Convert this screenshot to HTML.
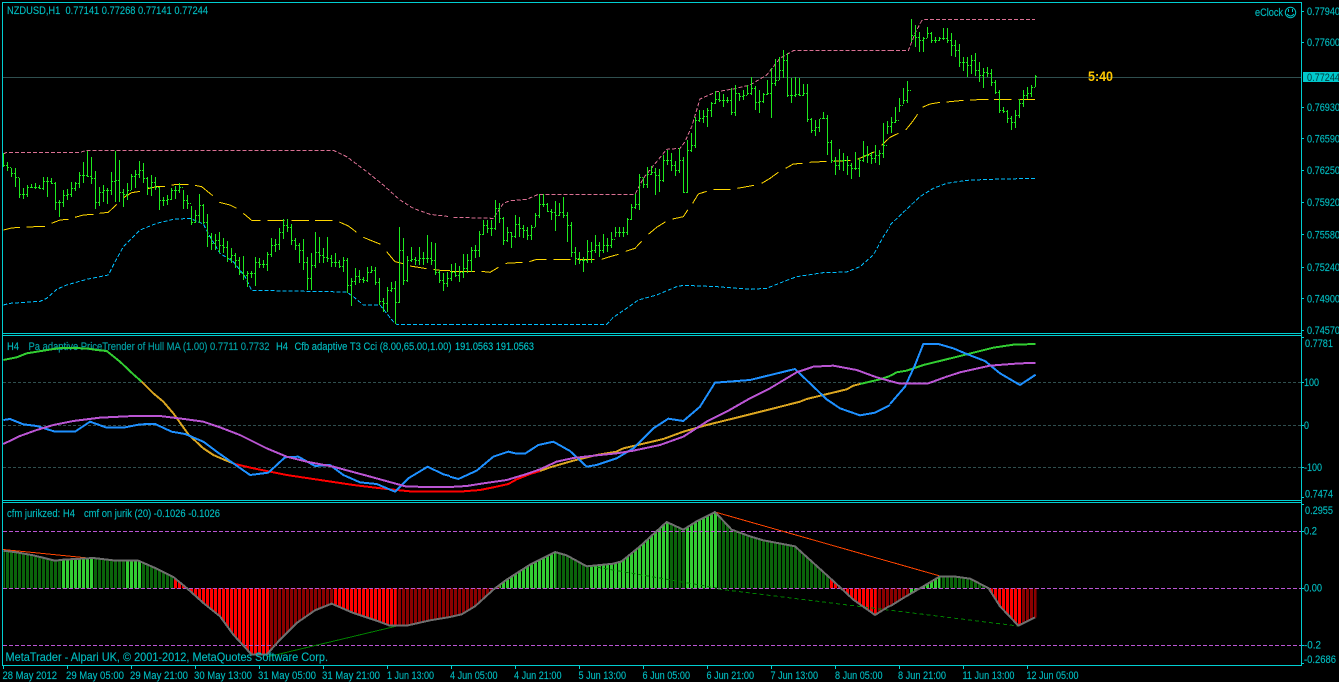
<!DOCTYPE html>
<html>
<head>
<meta charset="utf-8">
<title>NZDUSD,H1</title>
<style>
html,body{margin:0;padding:0;background:#000;width:1339px;height:682px;overflow:hidden}
svg{display:block}
text{font-family:"Liberation Sans",Arial,sans-serif;font-size:11px;fill:#00c0c4;stroke:#00a8ac;stroke-width:.15}
.c{shape-rendering:crispEdges}
</style>
</head>
<body>
<svg width="1339" height="682" viewBox="0 0 1339 682" xmlns="http://www.w3.org/2000/svg">
<defs>
<pattern id="gap" x="1" y="0" width="4" height="10" patternUnits="userSpaceOnUse"><rect width="1" height="10" fill="#000" shape-rendering="crispEdges"/></pattern>
<clipPath id="h1"><path d="M10 271V158L50 163 100 172 165 188 190 185 280 180 340 187 415 188 470 212 520 237 560 270 610 315 660 355 700 410 755 470 800 470 840 425 890 375 945 337 995 317 1060 345 1130 368 1170 383 1220 383 1290 367 1350 357V271Z"/></clipPath>
<clipPath id="h2"><path d="M0 271V357L35 349 75 325 130 275 170 245 240 200 315 162 350 172 410 205 490 197 515 190 570 145 650 72 700 95 740 70 795 42 845 95 900 115 940 127 1035 145 1140 240 1210 305 1275 351 1320 323V271Z"/></clipPath>
<clipPath id="h3"><path d="M0 271V325L40 300 100 265 150 235 190 235 240 242 295 270 330 325 385 383 440 358V271Z"/></clipPath>
</defs>
<rect width="1339" height="682" fill="#000"/>

<!-- main panel: price line -->
<path class="c" d="M3 77.5H1302" stroke="#2f4f4f" fill="none"/>

<!-- bands -->
<g fill="none" stroke-width="3" class="c" stroke-linejoin="round">
<g transform="scale(.33333)">
<path stroke="#db7093" stroke-dasharray="12 6" d="M10 462L20 457 240 457 260 451 1000 451 1040 470 1100 515 1150 555 1200 600 1240 625 1290 643 1350 650"/>
<path stroke="#00bfff" stroke-dasharray="12 6" d="M10 915L30 910 120 904 140 895 170 868 200 855 260 838 325 825 340 795 370 740 420 690 470 670 520 658 570 655 610 672 630 710 660 760 700 785 735 830 755 871 1040 876 1060 890 1090 915 1140 915 1180 965 1190 973 1350 973"/>
<path stroke="#ffd700" d="M10 690L35 684 60 682M80 681L135 679M155 670L180 660 205 658M225 652L250 645 280 643M298 640L325 637 350 613M372 592L395 578 420 574M443 566L470 560 495 559M515 555L535 553 565 553M585 556L605 560 638 587M658 607L690 615 710 625M730 640L755 661 782 661M802 661L854 661M875 661L927 661M945 661L998 661M1018 666L1045 678 1070 697M1090 712L1142 733M1160 755L1185 785 1210 791M1230 798L1280 806M1300 808L1320 811 1350 811"/>
</g>
<g transform="translate(450 0) scale(.33333)">
<path stroke="#db7093" stroke-dasharray="12 6" d="M10 652L130 655 160 610 180 602 230 598 265 583 555 583 580 535 620 485 650 448 690 445 705 425 725 380 750 297 800 275 850 267 900 255 950 225 990 175 1030 152 1320 152"/>
<path stroke="#00bfff" stroke-dasharray="12 6" d="M0 973L470 973 490 952 530 925 565 900 620 885 680 860 700 856 800 860 900 868 950 865 1000 845 1040 830 1120 818 1190 816 1230 800 1270 765 1300 710 1320 680"/>
<path stroke="#ffd700" d="M0 814L75 814M95 814L120 817 145 802M167 790L218 787M238 785L260 778 290 778M310 778L362 778M382 778L434 778M455 778L480 770 505 763M527 754L555 745 575 724M595 703L620 682 647 665M668 657L700 650 713 630M728 610L745 582 770 574M790 568L842 568M862 565L912 556M935 550L960 535 985 517M1007 505L1030 492 1058 490M1078 487L1130 484M1150 484L1202 481M1222 478L1250 466 1274 455M1295 436L1320 412"/>
</g>
<g transform="translate(890 0) scale(.33333)">
<path stroke="#db7093" stroke-dasharray="12 6" d="M0 152L55 152 75 100 95 62 105 58 435 58"/>
<path stroke="#00bfff" stroke-dasharray="12 6" d="M0 675L40 637 90 590 130 565 170 550 230 541 300 538 435 535"/>
<path stroke="#ffd700" d="M0 412L25 400M47 390L65 368 83 343M97 322L120 312 150 307M170 306L220 301M240 300L295 298M312 298L365 298M385 298L435 298"/>
</g>
</g>

<!-- OHLC bars -->
<path class="c" stroke="#1eea1e" fill="none" d="M3.5 153V167M7.5 162V171M11.5 168V177M15.5 168V187M19.5 178V198M23.5 188V199M27.5 185V197M31.5 184V188M35.5 183V189M39.5 185V189M43.5 177V190M47.5 177V197M51.5 178V184M55.5 182V210M59.5 200V217M63.5 190V207M67.5 189V200M71.5 182V197M75.5 182V191M79.5 172V188M83.5 162V183M87.5 151V177M91.5 157V184M95.5 171V209M99.5 187V206M103.5 185V202M107.5 188V204M111.5 172V195M115.5 151V202M119.5 160V202M123.5 189V207M127.5 183V200M131.5 174V190M135.5 170V188M139.5 161V178M143.5 163V183M147.5 177V195M151.5 175V196M155.5 177V190M159.5 187V210M163.5 197V206M167.5 195V205M171.5 188V200M175.5 186V199M179.5 183V193M183.5 190V209M187.5 195V209M191.5 206V225M195.5 210V223M199.5 194V223M203.5 204V224M207.5 214V247M211.5 233V250M215.5 234V250M219.5 232V253M223.5 238V253M227.5 241V262M231.5 248V263M235.5 253V268M239.5 257V275M243.5 256V280M247.5 271V287M251.5 271V278M255.5 257V286M259.5 258V268M263.5 260V268M267.5 252V271M271.5 238V257M275.5 239V252M279.5 228V250M283.5 219V239M287.5 219V232M291.5 224V245M295.5 238V250M299.5 243V263M303.5 239V270M307.5 257V290M311.5 253V290M315.5 232V268M319.5 237V263M323.5 248V263M327.5 237V262M331.5 255V267M335.5 253V267M339.5 260V268M343.5 257V272M347.5 258V293M351.5 278V306M355.5 268V285M359.5 270V283M363.5 277V283M367.5 267V282M371.5 266V273M375.5 267V285M379.5 278V305M383.5 298V312M387.5 287V312M391.5 282V292M395.5 281V324M399.5 227V303M403.5 238V285M407.5 256V282M411.5 247V262M415.5 257V265M419.5 247V265M423.5 252V265M427.5 235V263M431.5 242V265M435.5 243V275M439.5 270V283M443.5 273V291M447.5 272V287M451.5 264V281M455.5 263V277M459.5 266V282M463.5 254V278M467.5 254V273M471.5 247V272M475.5 245V258M479.5 231V257M483.5 220V235M487.5 220V233M491.5 220V236M495.5 200V230M499.5 203V223M503.5 217V245M507.5 227V242M511.5 232V248M515.5 215V238M519.5 217V237M523.5 225V238M527.5 227V240M531.5 225V240M535.5 213V227M539.5 194V218M543.5 194V207M547.5 203V212M551.5 209V220M555.5 201V231M559.5 203V216M563.5 197V218M567.5 212V242M571.5 222V257M575.5 247V265M579.5 252V264M583.5 257V272M587.5 240V263M591.5 242V263M595.5 235V253M599.5 242V257M603.5 234V253M607.5 238V252M611.5 232V248M615.5 227V237M619.5 227V237M623.5 227V237M627.5 218V235M631.5 204V220M635.5 194V209M639.5 174V210M643.5 178V188M647.5 167V188M651.5 166V175M655.5 168V195M659.5 169V192M663.5 155V182M667.5 150V165M671.5 153V171M675.5 161V176M679.5 148V173M683.5 157V193M687.5 140V193M691.5 133V152M695.5 117V148M699.5 110V122M703.5 110V123M707.5 108V127M711.5 102V117M715.5 91V104M719.5 92V102M723.5 94V107M727.5 97V103M731.5 88V115M735.5 85V116M739.5 93V101M743.5 90V100M747.5 85V95M751.5 77V95M755.5 86V110M759.5 90V113M763.5 93V103M767.5 80V95M771.5 68V118M775.5 59V86M779.5 57V80M783.5 50V78M787.5 53V97M791.5 78V103M795.5 77V97M799.5 78V96M803.5 84V96M807.5 84V122M811.5 118V133M815.5 120V136M819.5 119V132M823.5 112V119M827.5 115V155M831.5 140V163M835.5 157V175M839.5 149V170M843.5 153V171M847.5 156V175M851.5 163V179M855.5 152V170M859.5 158V177M863.5 141V162M867.5 146V163M871.5 152V164M875.5 145V163M879.5 150V165M883.5 123V158M887.5 121V134M891.5 117V133M895.5 107V123M899.5 98V112M903.5 88V104M907.5 81V103M911.5 19V42M915.5 25V47M919.5 32V52M923.5 37V52M927.5 27V38M931.5 32V43M935.5 37V43M939.5 37V41M943.5 28V40M947.5 28V43M951.5 33V56M955.5 40V57M959.5 44V67M963.5 57V71M967.5 57V77M971.5 55V74M975.5 53V76M979.5 62V82M983.5 68V88M987.5 67V77M991.5 69V86M995.5 80V94M999.5 90V113M1003.5 107V113M1007.5 110V123M1011.5 116V130M1015.5 110V128M1019.5 99V118M1023.5 90V107M1027.5 87V99M1031.5 85V97M1035.5 75V87"/>
<path class="c" stroke="#1eea1e" fill="none" stroke-dasharray="1 1" transform="translate(0 .5)" d="M4 165h3M8 167h3M12 173h3M16 177h3M20 194h3M24 194h3M28 187h3M32 187h3M36 187h3M40 188h3M44 181h3M48 181h3M52 183h3M56 202h3M60 202h3M64 195h3M68 194h3M72 188h3M76 183h3M80 175h3M84 175h3M88 176h3M92 178h3M96 202h3M100 192h3M104 190h3M108 190h3M112 181h3M116 180h3M120 192h3M124 194h3M128 190h3M132 176h3M136 174h3M140 170h3M144 178h3M148 187h3M152 182h3M156 187h3M160 200h3M164 200h3M168 199h3M172 190h3M176 190h3M180 187h3M184 200h3M188 203h3M192 222h3M196 215h3M200 205h3M204 222h3M208 236h3M212 243h3M216 240h3M220 245h3M224 247h3M228 258h3M232 255h3M236 260h3M240 272h3M244 275h3M248 273h3M252 273h3M256 262h3M260 264h3M264 264h3M268 254h3M272 245h3M276 244h3M280 232h3M284 225h3M288 227h3M292 240h3M296 245h3M300 250h3M304 262h3M308 278h3M312 265h3M316 252h3M320 255h3M324 257h3M328 258h3M332 262h3M336 262h3M340 266h3M344 260h3M348 285h3M352 281h3M356 276h3M360 279h3M364 280h3M368 272h3M372 270h3M376 282h3M380 301h3M384 303h3M388 290h3M392 288h3M396 302h3M400 250h3M404 280h3M408 260h3M412 259h3M416 260h3M420 258h3M424 258h3M428 258h3M432 260h3M436 272h3M440 280h3M444 283h3M448 278h3M452 272h3M456 275h3M460 272h3M464 268h3M468 260h3M472 250h3M476 250h3M480 234h3M484 225h3M488 228h3M492 228h3M496 208h3M500 218h3M504 240h3M508 232h3M512 236h3M516 224h3M520 228h3M524 230h3M528 235h3M532 227h3M536 215h3M540 204h3M544 204h3M548 211h3M552 212h3M556 215h3M560 212h3M564 215h3M568 225h3M572 252h3M576 258h3M580 260h3M584 260h3M588 251h3M592 250h3M596 245h3M600 250h3M604 245h3M608 245h3M612 239h3M616 232h3M620 232h3M624 232h3M628 219h3M632 207h3M636 204h3M640 177h3M644 184h3M648 174h3M652 172h3M656 175h3M660 180h3M664 160h3M668 160h3M672 165h3M676 170h3M680 160h3M684 192h3M688 150h3M692 145h3M696 120h3M700 118h3M704 116h3M708 110h3M712 103h3M716 99h3M720 100h3M724 100h3M728 100h3M732 112h3M736 93h3M740 96h3M744 95h3M748 93h3M752 88h3M756 102h3M760 101h3M764 94h3M768 93h3M772 83h3M776 80h3M780 70h3M784 60h3M788 95h3M792 95h3M796 94h3M800 95h3M804 93h3M808 119h3M812 130h3M816 127h3M820 118h3M824 118h3M828 142h3M832 160h3M836 165h3M840 160h3M844 160h3M848 165h3M852 168h3M856 168h3M860 160h3M864 155h3M868 155h3M872 158h3M876 155h3M880 153h3M884 145h3M888 126h3M892 122h3M896 120h3M900 105h3M904 100h3M908 90h3M912 35h3M916 37h3M920 40h3M924 38h3M928 33h3M932 40h3M936 40h3M940 38h3M944 38h3M948 40h3M952 45h3M956 50h3M960 62h3M964 62h3M968 65h3M972 60h3M976 70h3M980 75h3M984 72h3M988 73h3M992 82h3M996 92h3M1000 110h3M1004 111h3M1008 118h3M1012 122h3M1016 115h3M1020 103h3M1024 95h3M1028 93h3M1032 87h3M1036 76h1"/>

<!-- main panel text -->
<text x="7" y="14" textLength="201" lengthAdjust="spacingAndGlyphs">NZDUSD,H1&#160;&#160;0.77141 0.77268 0.77141 0.77244</text>
<text x="1255" y="16" textLength="28" lengthAdjust="spacingAndGlyphs">eClock</text>
<g fill="none" stroke="#00c0c4">
<circle cx="1290.5" cy="12.5" r="5.2"/>
<path d="M1287 14q3.5 4 7 0"/>
</g>
<rect class="c" x="1288" y="9" width="1" height="3" fill="#00c0c4"/>
<rect class="c" x="1292" y="9" width="1" height="3" fill="#00c0c4"/>
<text x="1088" y="81" textLength="25" lengthAdjust="spacingAndGlyphs" style="font-size:14px;font-weight:bold;fill:#ffc800;stroke:none">5:40</text>

<!-- panel 2 levels -->
<path class="c" fill="none" stroke="#2f4f4f" stroke-dasharray="3 2" d="M3 382.5H1301M3 425.5H1301M3 467.5H1301"/>
<text x="7" y="350" textLength="12" lengthAdjust="spacingAndGlyphs">H4</text>
<text x="28.5" y="350" textLength="241" lengthAdjust="spacingAndGlyphs" style="fill:#00a0a4">Pa adaptive PriceTrender of Hull MA (1.00) 0.7711 0.7732</text>
<text x="276" y="350" textLength="12" lengthAdjust="spacingAndGlyphs">H4</text>
<text x="294.5" y="350" textLength="157" lengthAdjust="spacingAndGlyphs">Cfb adaptive T3 Cci (8.00,65.00,1.00)</text>
<text x="455" y="350" textLength="79" lengthAdjust="spacingAndGlyphs" style="fill:#00d0d4">191.0563 191.0563</text>

<!-- panel 2 lines -->
<g fill="none" stroke-width="6" class="c" stroke-linejoin="round">
<g transform="translate(0 330) scale(.33333)">
<path stroke="#32cd32" d="M10 90L50 82 80 70 130 62 180 54 260 55 290 60 320 63 360 95 400 133 425 155"/>
<path stroke="#daa520" d="M425 155L460 190 490 215 520 250 545 285 565 313 610 355 640 375 670 388 705 402"/>
<path stroke="#ff0000" d="M705 402L760 415 860 435 960 450 1060 465 1160 477 1240 485 1350 485"/>
<path stroke="#1e90ff" d="M10 270L30 267 70 283 110 288 165 305 225 305 270 275 320 293 370 293 420 283 465 282 515 305 555 312 610 335 650 365 700 400 750 435 805 428 855 382 895 380 945 408 990 405 1030 435 1080 457 1130 462 1185 485 1225 445 1283 410 1330 433 1350 438"/>
<path stroke="#ba55d3" d="M10 342L60 318 110 300 160 285 220 273 300 263 400 258 480 258 560 268 610 275 660 292 720 315 800 355 860 380 920 395 1000 410 1100 437 1220 470 1350 471"/>
</g>
<g transform="translate(450 330) scale(.33333)">
<path stroke="#ff0000" d="M0 485L40 484 90 480 130 472 175 462 200 448 240 432 270 423"/>
<path stroke="#daa520" d="M270 423L300 412 370 392 440 375 500 365 520 355 640 327 700 305 770 285 860 263 960 238 1050 215 1070 207 1190 178 1210 167 1230 162"/>
<path stroke="#32cd32" d="M1230 162L1290 148 1320 138"/>
<path stroke="#1e90ff" d="M0 440L25 447 80 422 130 380 175 365 200 371 225 371 265 345 310 335 360 363 410 410 440 405 500 385 550 355 610 295 655 266 700 273 750 230 795 158 900 150 1035 117 1080 160 1130 208 1170 235 1230 256 1275 248 1320 225"/>
<path stroke="#ba55d3" d="M0 471L50 468 100 460 170 450 230 432 270 418 320 395 370 384 440 376 500 370 550 362 630 345 700 320 770 275 830 245 900 205 960 175 1040 127 1090 110 1150 107 1220 120 1280 142 1320 153"/>
</g>
<g transform="translate(890 330) scale(.33333)">
<path stroke="#32cd32" d="M0 138L20 127 50 122 100 105 190 83 250 68 310 53 370 44 437 42"/>
<path stroke="#1e90ff" d="M0 222L45 170 75 105 100 42 145 42 190 55 230 72 285 93 330 130 390 165 437 134"/>
<path stroke="#ba55d3" d="M0 153L30 161 115 160 170 140 210 127 300 107 390 100 437 99"/>
</g>
</g>

<!-- panel 3 histogram -->
<g class="c">
<g transform="translate(0 498) scale(.33333)" clip-path="url(#h1)">
<rect x="10" y="0" width="176" height="500" fill="#0a640a"/>
<rect x="186" y="0" width="94" height="500" fill="#32cd32"/>
<rect x="280" y="0" width="96" height="500" fill="#0a640a"/>
<rect x="376" y="0" width="48" height="500" fill="#32cd32"/>
<rect x="424" y="0" width="98" height="500" fill="#0a640a"/>
<rect x="522" y="0" width="286" height="500" fill="#ff0000"/>
<rect x="808" y="0" width="192" height="500" fill="#8b0000"/>
<rect x="1000" y="0" width="190" height="500" fill="#ff0000"/>
<rect x="1190" y="0" width="160" height="500" fill="#8b0000"/>
</g>
<g transform="translate(450 498) scale(.33333)" clip-path="url(#h2)">
<rect x="0" y="0" width="148" height="500" fill="#8b0000"/>
<rect x="148" y="0" width="168" height="500" fill="#32cd32"/>
<rect x="316" y="0" width="104" height="500" fill="#0a640a"/>
<rect x="420" y="0" width="235" height="500" fill="#32cd32"/>
<rect x="655" y="0" width="53" height="500" fill="#0a640a"/>
<rect x="708" y="0" width="94" height="500" fill="#32cd32"/>
<rect x="802" y="0" width="338" height="500" fill="#0a640a"/>
<rect x="1140" y="0" width="140" height="500" fill="#ff0000"/>
<rect x="1280" y="0" width="40" height="500" fill="#8b0000"/>
</g>
<g transform="translate(890 498) scale(.33333)" clip-path="url(#h3)">
<rect x="0" y="0" width="60" height="500" fill="#8b0000"/>
<rect x="60" y="0" width="90" height="500" fill="#32cd32"/>
<rect x="150" y="0" width="145" height="500" fill="#0a640a"/>
<rect x="295" y="0" width="100" height="500" fill="#ff0000"/>
<rect x="395" y="0" width="50" height="500" fill="#8b0000"/>
</g>
<rect x="3" y="503" width="1040" height="161" fill="url(#gap)"/>
</g>

<!-- panel 3 levels -->
<path class="c" fill="none" stroke="#ba55d3" stroke-dasharray="4 2" d="M3 531.5H1301M3 588.5H1301M3 645.5H1301"/>

<!-- panel 3 text -->
<text x="7" y="517" textLength="68" lengthAdjust="spacingAndGlyphs">cfm jurikzed: H4</text>
<text x="84" y="517" textLength="136" lengthAdjust="spacingAndGlyphs">cmf on jurik (20) -0.1026 -0.1026</text>

<!-- trend lines and gray curve -->
<g fill="none" class="c">
<path stroke="#ff4500" d="M3 549.5L93 558.5M715 512L940 576"/>
<path stroke="#008000" d="M267 657L397 626"/>
<path stroke="#008000" stroke-dasharray="4 3" d="M590 566L717 588M718 589L1018 626"/>
</g>
<g fill="none" stroke="#6e6e6e" stroke-width="6" class="c" stroke-linejoin="round">
<path transform="translate(0 498) scale(.33333)" d="M10 158L50 163 100 172 165 188 190 185 280 180 340 187 415 188 470 212 520 237 560 270 610 315 660 355 700 410 755 470 800 470 840 425 890 375 945 337 995 317 1060 345 1130 368 1170 383 1220 383 1290 367 1350 357"/>
<path transform="translate(450 498) scale(.33333)" d="M0 357L35 349 75 325 130 275 170 245 240 200 315 162 350 172 410 205 490 197 515 190 570 145 650 72 700 95 740 70 795 42 845 95 900 115 940 127 1035 145 1140 240 1210 305 1275 351 1320 323"/>
<path transform="translate(890 498) scale(.33333)" d="M0 325L40 300 100 265 150 235 190 235 240 242 295 270 330 325 385 383 435 358"/>
</g>
<text x="5.5" y="661" textLength="322.5" lengthAdjust="spacingAndGlyphs" style="font-size:12px">MetaTrader - Alpari UK, © 2001-2012, MetaQuotes Software Corp.</text>

<!-- frames -->
<path class="c" fill="none" stroke="#00ced1" d="M2.5 2.5H1301.5V665.5H2.5ZM2.5 333.5H1301.5M2.5 335.5H1301.5M2.5 500.5H1301.5M2.5 502.5H1301.5"/>
<!-- right-axis ticks -->
<path class="c" fill="none" stroke="#00ced1" d="M1302 11.5h2M1302 42.5h2M1302 107.5h2M1302 138.5h2M1302 170.5h2M1302 202.5h2M1302 234.5h2M1302 267.5h2M1302 298.5h2M1302 330.5h2M1302 337.5h2M1302 382.5h2M1302 425.5h2M1302 467.5h2M1302 497.5h2M1302 504.5h2M1302 531.5h2M1302 588.5h2M1302 645.5h2M1302 663.5h2"/>
<!-- time-axis ticks -->
<path class="c" fill="none" stroke="#00ced1" d="M3.5 666v3M67.5 666v3M131.5 666v3M195.5 666v3M259.5 666v3M323.5 666v3M387.5 666v3M451.5 666v3M515.5 666v3M579.5 666v3M643.5 666v3M707.5 666v3M771.5 666v3M835.5 666v3M899.5 666v3M963.5 666v3M1027.5 666v3"/>

<!-- right-axis labels -->
<text x="1307" y="15" textLength="33" lengthAdjust="spacingAndGlyphs">0.77940</text>
<text x="1307" y="46" textLength="33" lengthAdjust="spacingAndGlyphs">0.77600</text>
<rect class="c" x="1303" y="72" width="36" height="10" fill="#00c8cc"/>
<text x="1307" y="81" textLength="33" lengthAdjust="spacingAndGlyphs" style="fill:#003a3c;stroke:none">0.77244</text>
<text x="1307" y="111" textLength="33" lengthAdjust="spacingAndGlyphs">0.76930</text>
<text x="1307" y="142.5" textLength="33" lengthAdjust="spacingAndGlyphs">0.76590</text>
<text x="1307" y="174" textLength="33" lengthAdjust="spacingAndGlyphs">0.76250</text>
<text x="1307" y="206" textLength="33" lengthAdjust="spacingAndGlyphs">0.75920</text>
<text x="1307" y="238.5" textLength="33" lengthAdjust="spacingAndGlyphs">0.75580</text>
<text x="1307" y="271" textLength="33" lengthAdjust="spacingAndGlyphs">0.75240</text>
<text x="1307" y="302.5" textLength="33" lengthAdjust="spacingAndGlyphs">0.74900</text>
<text x="1307" y="334" textLength="33" lengthAdjust="spacingAndGlyphs">0.74570</text>

<text x="1305" y="347" textLength="28" lengthAdjust="spacingAndGlyphs">0.7781</text>
<text x="1304" y="386" textLength="15" lengthAdjust="spacingAndGlyphs">100</text>
<text x="1304" y="429" textLength="5" lengthAdjust="spacingAndGlyphs">0</text>
<text x="1304" y="471" textLength="18" lengthAdjust="spacingAndGlyphs">-100</text>
<text x="1305" y="497.5" textLength="28" lengthAdjust="spacingAndGlyphs">0.7474</text>

<text x="1305" y="514" textLength="28" lengthAdjust="spacingAndGlyphs">0.2955</text>
<text x="1304" y="534.5" textLength="13" lengthAdjust="spacingAndGlyphs">0.2</text>
<text x="1304" y="591.5" textLength="18" lengthAdjust="spacingAndGlyphs">0.00</text>
<text x="1304" y="648.5" textLength="17" lengthAdjust="spacingAndGlyphs">-0.2</text>
<text x="1304" y="663" textLength="32" lengthAdjust="spacingAndGlyphs">-0.2686</text>

<!-- time-axis labels -->
<text x="2.5" y="679" textLength="54.5" lengthAdjust="spacingAndGlyphs">28 May 2012</text>
<text x="66" y="679" textLength="58" lengthAdjust="spacingAndGlyphs">29 May 05:00</text>
<text x="130" y="679" textLength="58" lengthAdjust="spacingAndGlyphs">29 May 21:00</text>
<text x="194" y="679" textLength="58" lengthAdjust="spacingAndGlyphs">30 May 13:00</text>
<text x="258" y="679" textLength="58" lengthAdjust="spacingAndGlyphs">31 May 05:00</text>
<text x="322" y="679" textLength="58" lengthAdjust="spacingAndGlyphs">31 May 21:00</text>
<text x="387" y="679" textLength="47" lengthAdjust="spacingAndGlyphs">1 Jun 13:00</text>
<text x="450" y="679" textLength="47.5" lengthAdjust="spacingAndGlyphs">4 Jun 05:00</text>
<text x="514" y="679" textLength="47.5" lengthAdjust="spacingAndGlyphs">4 Jun 21:00</text>
<text x="578.5" y="679" textLength="47.5" lengthAdjust="spacingAndGlyphs">5 Jun 13:00</text>
<text x="642.5" y="679" textLength="47.5" lengthAdjust="spacingAndGlyphs">6 Jun 05:00</text>
<text x="706.5" y="679" textLength="47.5" lengthAdjust="spacingAndGlyphs">6 Jun 21:00</text>
<text x="770.5" y="679" textLength="47.5" lengthAdjust="spacingAndGlyphs">7 Jun 13:00</text>
<text x="835" y="679" textLength="47.5" lengthAdjust="spacingAndGlyphs">8 Jun 05:00</text>
<text x="898" y="679" textLength="48" lengthAdjust="spacingAndGlyphs">8 Jun 21:00</text>
<text x="962.5" y="679" textLength="52" lengthAdjust="spacingAndGlyphs">11 Jun 13:00</text>
<text x="1026.5" y="679" textLength="52" lengthAdjust="spacingAndGlyphs">12 Jun 05:00</text>
</svg>
</body>
</html>
